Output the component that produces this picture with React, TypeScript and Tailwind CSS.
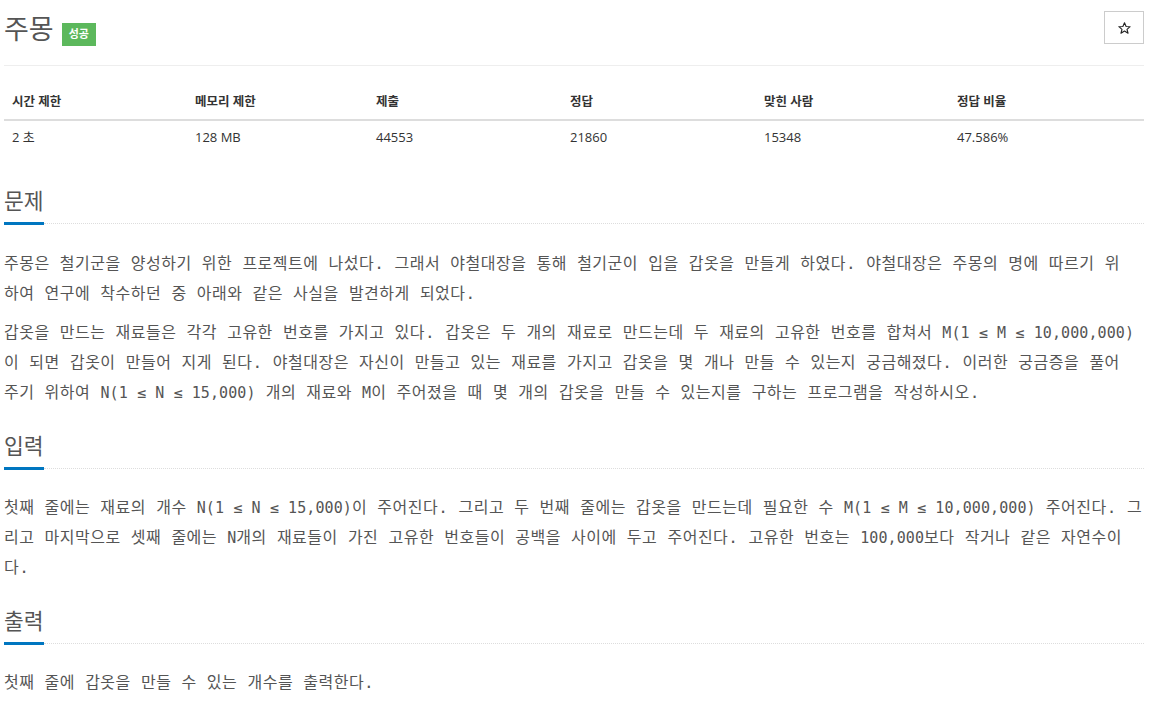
import React from "react";

const uiFont = { fontFamily: '"Open Sans", "Noto Sans CJK KR", sans-serif' };
const monoFont = { fontFamily: '"DejaVu Sans Mono", "Noto Sans CJK KR", monospace' };

function Heading({ children, mt }: { children: React.ReactNode; mt: string }) {
  return (
    <div className={`flex items-end ${mt}`}>
      <span
        className="text-[21.5px] leading-[28px] pb-[7px] border-b-[3px] border-[#0076c0] text-[#555]"
        style={uiFont}
      >
        {children}
      </span>
      <div className="flex-1 border-b border-dotted border-[#ddd] mb-[1px]" />
    </div>
  );
}

function X({ children }: { children: React.ReactNode }) {
  return <span className="text-[15px] tracking-[0.1px]">{children}</span>;
}

function Para({ lines, className = "" }: { lines: React.ReactNode[]; className?: string }) {
  return (
    <p
      className={`text-[16px] tracking-[0.5px] leading-[30px] text-[#555] whitespace-nowrap ${className}`}
      style={monoFont}
    >
      {lines.map((l, i) => (
        <React.Fragment key={i}>
          {l}
          {i < lines.length - 1 && <br />}
        </React.Fragment>
      ))}
    </p>
  );
}

export default function App() {
  const heads = ["시간 제한", "메모리 제한", "제출", "정답", "맞힌 사람", "정답 비율"];
  const vals = ["2 초", "128 MB", "44553", "21860", "15348", "47.586%"];
  return (
    <div className="w-[1154px] h-[705px] overflow-hidden bg-white pl-[4px] pr-[10px]" style={uiFont}>
      {/* title row */}
      <div className="flex justify-between items-start pt-[11px]">
        <div className="flex items-start">
          <h1 className="text-[27px] leading-[36px] text-[#555] font-normal">주몽</h1>
          <span className="ml-[8px] mt-[12px] h-[23px] px-[7px] flex items-center bg-[#5cb85c] text-white text-[11px] font-semibold">
            성공
          </span>
        </div>
        <button className="w-[40px] h-[33px] border border-[#ccc] bg-white flex items-center justify-center">
          <svg width="13" height="12" viewBox="0 0 26 24">
            <polygon
              points="13,1.5 16.2,9 24.3,9.4 18,14.6 20.1,22.5 13,18 5.9,22.5 8,14.6 1.7,9.4 9.8,9"
              fill="none"
              stroke="#222"
              strokeWidth="2.2"
              strokeLinejoin="round"
            />
          </svg>
        </button>
      </div>
      <div className="mt-[18px] border-t border-[#eee]" />

      {/* table */}
      <div className="mt-[19px] text-[#333]">
        <div className="grid grid-cols-[183px_181px_194px_194px_193px_1fr] h-[36px] items-center border-b-2 border-[#ddd]">
          {heads.map((h) => (
            <div key={h} className="pl-[8px] text-[12.5px] font-bold">
              {h}
            </div>
          ))}
        </div>
        <div className="grid grid-cols-[183px_181px_194px_194px_193px_1fr] h-[33px] items-center">
          {vals.map((v) => (
            <div key={v} className="pl-[8px] text-[13px]">
              {v}
            </div>
          ))}
        </div>
      </div>

      {/* 문제 */}
      <Heading mt="mt-[33px]">문제</Heading>
      <Para
        className="mt-[24px]"
        lines={[
          "주몽은 철기군을 양성하기 위한 프로젝트에 나섰다. 그래서 야철대장을 통해 철기군이 입을 갑옷을 만들게 하였다. 야철대장은 주몽의 명에 따르기 위",
          "하여 연구에 착수하던 중 아래와 같은 사실을 발견하게 되었다.",
        ]}
      />
      <Para
        className="mt-[9px]"
        lines={[
          <>
            갑옷을 만드는 재료들은 각각 고유한 번호를 가지고 있다. 갑옷은 두 개의 재료로 만드는데 두 재료의 고유한 번호를 합쳐서{" "}
            <X>M(1 ≤ M ≤ 10,000,000)</X>
          </>,
          "이 되면 갑옷이 만들어 지게 된다. 야철대장은 자신이 만들고 있는 재료를 가지고 갑옷을 몇 개나 만들 수 있는지 궁금해졌다. 이러한 궁금증을 풀어",
          <>
            주기 위하여 <X>N(1 ≤ N ≤ 15,000)</X> 개의 재료와 <X>M</X>이 주어졌을 때 몇 개의 갑옷을 만들 수 있는지를 구하는 프로그램을 작성하시오.
          </>,
        ]}
      />

      {/* 입력 */}
      <Heading mt="mt-[24px]">입력</Heading>
      <Para
        className="mt-[23px]"
        lines={[
          <>
            첫째 줄에는 재료의 개수 <X>N(1 ≤ N ≤ 15,000)</X>이 주어진다. 그리고 두 번째 줄에는 갑옷을 만드는데 필요한 수{" "}
            <X>M(1 ≤ M ≤ 10,000,000)</X> 주어진다. 그
          </>,
          <>
            리고 마지막으로 셋째 줄에는 <X>N</X>개의 재료들이 가진 고유한 번호들이 공백을 사이에 두고 주어진다. 고유한 번호는{" "}
            <X>100,000</X>보다 작거나 같은 자연수이
          </>,
          "다.",
        ]}
      />

      {/* 출력 */}
      <Heading mt="mt-[24px]">출력</Heading>
      <Para className="mt-[23px]" lines={["첫째 줄에 갑옷을 만들 수 있는 개수를 출력한다."]} />
    </div>
  );
}
